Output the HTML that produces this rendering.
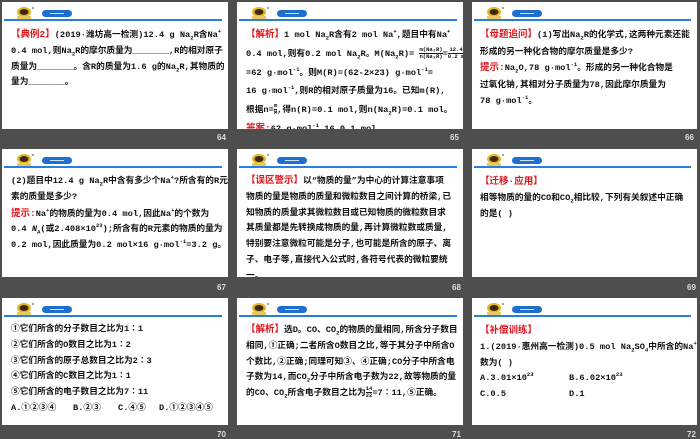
<!DOCTYPE html>
<html><head><meta charset="utf-8"><style>
*{margin:0;padding:0;box-sizing:border-box}
body{width:700px;height:438px;background:#4e4e4e;position:relative;overflow:hidden;font-family:"Liberation Mono","Noto Sans CJK SC",monospace;}
.s{position:absolute;background:#fff;overflow:hidden}
.logo{position:absolute;left:12px;top:4px;width:20px;height:13px}
.pill{position:absolute;left:40px;top:8px;width:30px;height:7px;border-radius:4px;background:#1e6fd0}
.pill:after{content:"";position:absolute;left:8px;top:3px;width:14px;height:1px;background:#cfe0f7}
.ln{position:absolute;left:2px;right:6px;top:17px;height:1.5px;background:#2a7ee0}
.t{position:absolute;left:9px;top:25px;font-size:8.7px;line-height:15.8px;color:#111;white-space:nowrap;font-weight:bold}
.r{color:#e0141c;font-size:9.5px}
.n{position:absolute;color:#ddd;font:bold 8px "Liberation Sans",sans-serif}
sub,sup{font-size:5.5px;line-height:0}
.f{display:inline-block;font-size:5.5px;line-height:6px;text-align:center;vertical-align:middle}
.f span{display:block}
.f span:first-child{border-bottom:0.6px solid #111}
.o{position:absolute}
</style></head><body>
<svg width="0" height="0" style="position:absolute"><defs><g id="lg"><ellipse cx="10" cy="6" rx="7" ry="5" fill="#e8b820"/><ellipse cx="10" cy="6" rx="4.5" ry="3" fill="#3a2a10"/><rect x="3" y="10" width="14" height="3" fill="#e8c860"/><circle cx="19" cy="2" r="1" fill="#888"/></g></defs></svg>

<div class="s" style="left:2px;top:2px;width:226px;height:127px">
<svg class="logo"><use href="#lg"/></svg><div class="pill"></div><div class="ln"></div>
<div class="t"><span class="r">【典例2】</span>(2019·潍坊高一检测)12.4 g Na<sub>2</sub>R含Na<sup>+</sup><br>0.4 mol,则Na<sub>2</sub>R的摩尔质量为_______,R的相对原子<br>质量为_______。含R的质量为1.6 g的Na<sub>2</sub>R,其物质的<br>量为_______。</div></div>
<div class="n" style="left:217px;top:133px">64</div>

<div class="s" style="left:237px;top:2px;width:226px;height:127px">
<svg class="logo"><use href="#lg"/></svg><div class="pill"></div><div class="ln"></div>
<div class="t" style="line-height:18.8px;top:24px"><span class="r">【解析】</span>1 mol Na<sub>2</sub>R含有2 mol Na<sup>+</sup>,题目中有Na<sup>+</sup><br>0.4 mol,则有0.2 mol Na<sub>2</sub>R。M(Na<sub>2</sub>R)= <span class="f"><span>m(Na₂R)</span><span>n(Na₂R)</span></span>=<span class="f"><span>12.4 g</span><span>0.2 mol</span></span><br>=62 g·mol<sup>-1</sup>。则M(R)=(62-2×23) g·mol<sup>-1</sup>=<br>16 g·mol<sup>-1</sup>,则R的相对原子质量为16。已知m(R),<br>根据n=<span class="f"><span>m</span><span>M</span></span>,得n(R)=0.1 mol,则n(Na<sub>2</sub>R)=0.1 mol。<br><span class="r">答案:</span>62 g·mol<sup>-1</sup> 16 0.1 mol</div></div>
<div class="n" style="left:450px;top:133px">65</div>

<div class="s" style="left:472px;top:2px;width:225px;height:127px">
<svg class="logo"><use href="#lg"/></svg><div class="pill"></div><div class="ln"></div>
<div class="t" style="left:8px;line-height:16.5px"><span class="r">【母题追问】</span>(1)写出Na<sub>2</sub>R的化学式,这两种元素还能<br>形成的另一种化合物的摩尔质量是多少?<br><span class="r">提示:</span>Na<sub>2</sub>O,78 g·mol<sup>-1</sup>。形成的另一种化合物是<br>过氧化钠,其相对分子质量为78,因此摩尔质量为<br>78 g·mol<sup>-1</sup>。</div></div>
<div class="n" style="left:685px;top:133px">66</div>

<div class="s" style="left:2px;top:149px;width:226px;height:128px">
<svg class="logo"><use href="#lg"/></svg><div class="pill"></div><div class="ln"></div>
<div class="t" style="top:25px">(2)题目中12.4 g Na<sub>2</sub>R中含有多少个Na<sup>+</sup>?所含有的R元<br>素的质量是多少?<br><span class="r">提示:</span>Na<sup>+</sup>的物质的量为0.4 mol,因此Na<sup>+</sup>的个数为<br>0.4 <i>N</i><sub>A</sub>(或2.408×10<sup>23</sup>);所含有的R元素的物质的量为<br>0.2 mol,因此质量为0.2 mol×16 g·mol<sup>-1</sup>=3.2 g。</div></div>
<div class="n" style="left:217px;top:283px">67</div>

<div class="s" style="left:237px;top:149px;width:226px;height:128px">
<svg class="logo"><use href="#lg"/></svg><div class="pill"></div><div class="ln"></div>
<div class="t" style="top:24px"><span class="r">【误区警示】</span>以“物质的量”为中心的计算注意事项<br>物质的量是物质的质量和微粒数目之间计算的桥梁,已<br>知物质的质量求其微粒数目或已知物质的微粒数目求<br>其质量都是先转换成物质的量,再计算微粒数或质量,<br>特别要注意微粒可能是分子,也可能是所含的原子、离<br>子、电子等,直接代入公式时,各符号代表的微粒要统<br>一。</div></div>
<div class="n" style="left:452px;top:283px">68</div>

<div class="s" style="left:472px;top:149px;width:225px;height:128px">
<svg class="logo"><use href="#lg"/></svg><div class="pill"></div><div class="ln"></div>
<div class="t" style="left:8px;top:25px"><span class="r">【迁移·应用】</span><br>相等物质的量的CO和CO<sub>2</sub>相比较,下列有关叙述中正确<br>的是(    )</div></div>
<div class="n" style="left:687px;top:283px">69</div>

<div class="s" style="left:2px;top:298px;width:226px;height:127px">
<svg class="logo"><use href="#lg"/></svg><div class="pill"></div><div class="ln"></div>
<div class="t" style="top:24px">①它们所含的分子数目之比为1∶1<br>②它们所含的O数目之比为1∶2<br>③它们所含的原子总数目之比为2∶3<br>④它们所含的C数目之比为1∶1<br>⑤它们所含的电子数目之比为7∶11<br><span>A.①②③④</span><span class="o" style="left:62px">B.②③</span><span class="o" style="left:107px">C.④⑤</span><span class="o" style="left:148px">D.①②③④⑤</span></div></div>
<div class="n" style="left:217px;top:430px">70</div>

<div class="s" style="left:237px;top:298px;width:226px;height:127px">
<svg class="logo"><use href="#lg"/></svg><div class="pill"></div><div class="ln"></div>
<div class="t" style="top:24px"><span class="r">【解析】</span>选D。CO、CO<sub>2</sub>的物质的量相同,所含分子数目<br>相同,①正确;二者所含O数目之比,等于其分子中所含O<br>个数比,②正确;同理可知③、④正确;CO分子中所含电<br>子数为14,而CO<sub>2</sub>分子中所含电子数为22,故等物质的量<br>的CO、CO<sub>2</sub>所含电子数目之比为<span class="f"><span>14</span><span>22</span></span>=7∶11,⑤正确。</div></div>
<div class="n" style="left:452px;top:430px">71</div>

<div class="s" style="left:472px;top:298px;width:225px;height:127px">
<svg class="logo"><use href="#lg"/></svg><div class="pill"></div><div class="ln"></div>
<div class="t" style="left:8px;top:25px"><span class="r">【补偿训练】</span><br>1.(2019·惠州高一检测)0.5 mol Na<sub>2</sub>SO<sub>4</sub>中所含的Na<sup>+</sup><br>数为(    )<br>A.3.01×10<sup>23</sup><span class="o" style="left:89px">B.6.02×10<sup>23</sup></span><br>C.0.5<span class="o" style="left:89px">D.1</span></div></div>
<div class="n" style="left:687px;top:430px">72</div>
</body></html>
